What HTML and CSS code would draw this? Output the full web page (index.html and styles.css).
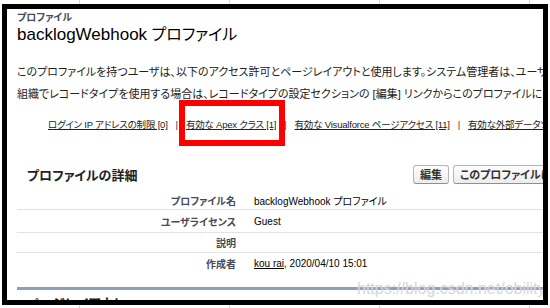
FILE: index.html
```html
<!DOCTYPE html>
<html lang="ja">
<head>
<meta charset="utf-8">
<link rel="stylesheet" href="styles.css">
</head>
<body>
<div class="frame">
  <div class="page">
    <div class="type">プロファイル</div>
    <h1 class="title"><span class="latin">backlogWebhook</span> プロファイル</h1>
    <p class="desc">このプロファイルを持つユーザは、以下のアクセス許可とページレイアウトと使用します。システム管理者は、ユーザの権限を変更できます。</p>
    <p class="desc">組織でレコードタイプを使用する場合は、レコードタイプの設定セクションの [編集] リンクからこのプロファイルに 1 つ以上のレコードタイプを割り当てます。</p>
    <div class="links">
      <a class="lnk">ログイン IP アドレスの制限 [0]</a>
      <span class="sep">|</span>
      <a class="lnk">有効な Apex クラス [1]</a>
      <span class="sep">|</span>
      <a class="lnk">有効な Visualforce ページアクセス [11]</a>
      <span class="sep">|</span>
      <a class="lnk">有効な外部データソースアクセス [0]</a>
    </div>
    <div class="sec-head">
      <h2 class="sec-title">プロファイルの詳細</h2>
      <div class="btns">
        <button class="btn">編集</button>
        <button class="btn">このプロファイルに属するユーザを表示</button>
      </div>
    </div>
    <div class="detail">
      <div class="row r1"><div class="lbl">プロファイル名</div><div class="val">backlogWebhook プロファイル</div></div>
      <div class="row r2"><div class="lbl">ユーザライセンス</div><div class="val">Guest</div></div>
      <div class="row r3"><div class="lbl">説明</div><div class="val"></div></div>
      <div class="row r4"><div class="lbl">作成者</div><div class="val"><a class="ulink">kou rai</a>, 2020/04/10 15:01</div></div>
    </div>
    <div class="sec2">
      <h2 class="sec-title2">ページレイアウト</h2>
    </div>
  </div>
  <div class="redbox"></div>
  <div class="watermark">https://blog.csdn.net/obility</div>
</div>
</body>
</html>
```
FILE: styles.css
```css
html, body {
  margin: 0;
  padding: 0;
}
body {
  width: 550px;
  height: 308px;
  overflow: hidden;
  background-color: #ffffff;
  background-image: repeating-linear-gradient(90deg, transparent 0, transparent 78px, #d6d6d6 78px, #d6d6d6 79px, transparent 79px, transparent 150px);
  background-position: 1px 0;
  font-family: "Liberation Sans", "Noto Sans CJK JP", sans-serif;
  font-feature-settings: "palt";
}
.frame {
  position: relative;
  margin: 4px 2px 0 2px;
  width: 546px;
  height: 301px;
  box-sizing: border-box;
  border: 5px solid #000;
  background: #fff;
  overflow: hidden;
}
.page {
  padding: 3px 0 0 10px;
  white-space: nowrap;
}
.type {
  font-size: 10px;
  line-height: 12px;
  font-weight: bold;
  color: #4a4a56;
}
.title {
  margin: 0;
  font-size: 16px;
  line-height: 22px;
  font-weight: normal;
  color: #000;
}
.title .latin {
  font-size: 17px;
}
.desc {
  margin: 0;
  font-size: 11px;
  line-height: 22px;
  color: #222;
}
.desc:first-of-type {
  margin-top: 15px;
}
.links {
  display: flex;
  gap: 8px;
  margin: 9px 0 0 31px;
  height: 20px;
  align-items: center;
  font-size: 9.5px;
  letter-spacing: -0.2px;
  color: #333;
}
.lnk {
  color: #222;
  text-decoration: underline;
}
.sep {
  color: #333;
}
.sec-head {
  display: flex;
  align-items: center;
  margin-top: 29px;
  height: 22px;
}
.sec-title {
  margin: 0 0 0 10px;
  font-size: 13px;
  font-weight: bold;
  color: #222;
  width: 386px;
  flex-shrink: 0;
}
.btns {
  display: flex;
  gap: 4px;
  flex-shrink: 0;
}
.btn {
  font-family: inherit;
  font-feature-settings: "palt";
  font-size: 11px;
  font-weight: bold;
  color: #333;
  height: 19px;
  padding: 0 6px;
  border: 1px solid #b5b5b5;
  border-bottom-color: #8f8f8f;
  border-radius: 3px;
  background: linear-gradient(#ffffff, #ececec);
  white-space: nowrap;
}
.detail {
  margin: 6px 0 0 0;
  width: 540px;
}
.row {
  display: flex;
  align-items: center;
  border-bottom: 1px solid #e3e3e3;
  font-size: 10px;
}
.r1 { height: 18px; }
.r2 { height: 22px; }
.r3 { height: 19px; }
.r4 { height: 20px; border-bottom: none; }
.lbl {
  width: 219px;
  text-align: right;
  font-weight: bold;
  color: #4a4a56;
}
.val {
  padding-left: 18px;
  color: #000;
}
.ulink {
  color: #000;
  text-decoration: underline;
}
.sec2 {
  margin-top: 14px;
  border-top: 3px solid #8e9dbe;
  width: 540px;
}
.sec-title2 {
  margin: 3px 0 0 10px;
  font-size: 13px;
  font-weight: bold;
  color: #222;
}
.redbox {
  position: absolute;
  left: 172px;
  top: 91px;
  width: 106px;
  height: 46px;
  box-sizing: border-box;
  border: 6px solid #ff0000;
}
.watermark {
  position: absolute;
  left: 350px;
  top: 271px;
  font-family: "Liberation Sans", sans-serif;
  font-size: 16px;
  color: rgba(200, 200, 200, 0.75);
  text-shadow: 0 0 1px rgba(255,255,255,0.8);
  white-space: nowrap;
}
```
